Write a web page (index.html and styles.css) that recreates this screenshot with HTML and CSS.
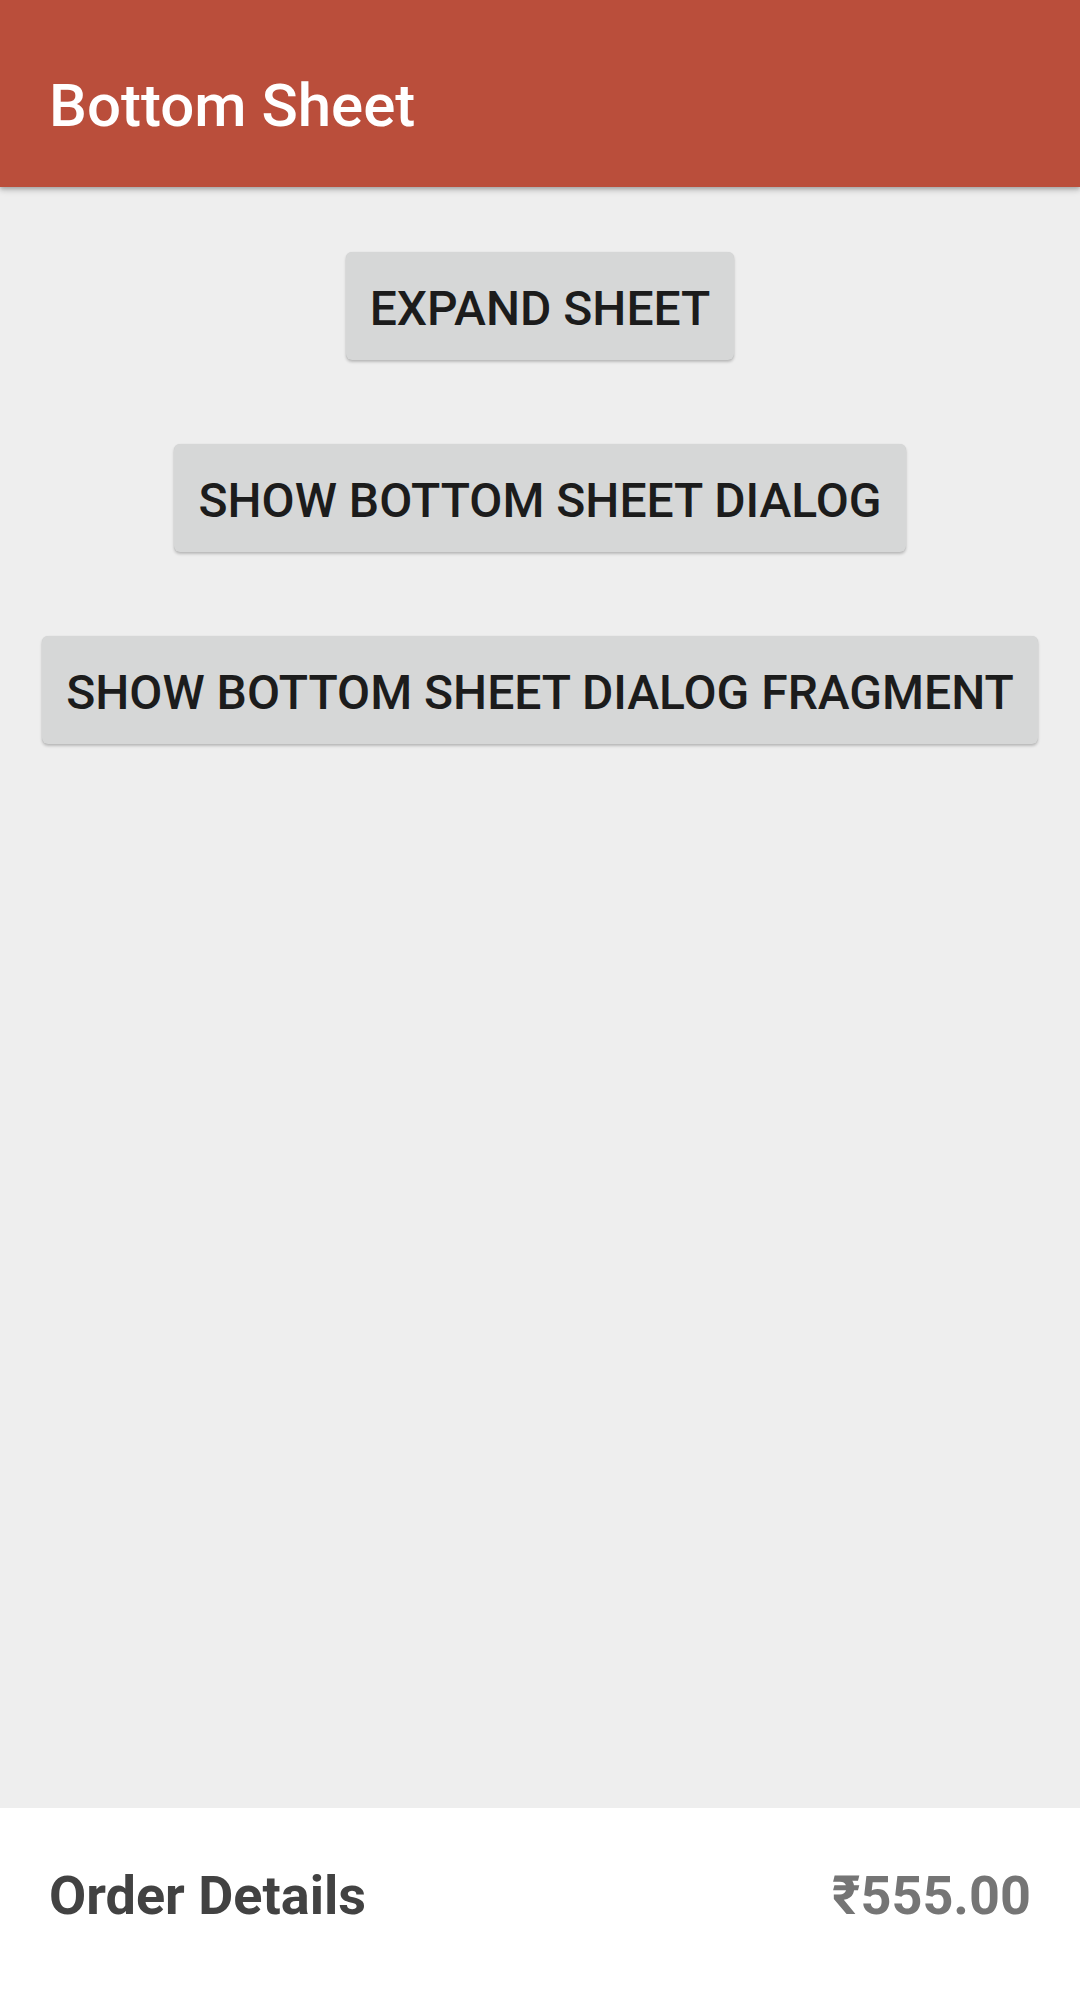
FILE: index.html
```html
<!DOCTYPE html>
<html>
<head>
<meta charset="utf-8">
<link rel="stylesheet" href="styles.css">
</head>
<body>
<div class="screen">
  <header class="appbar">
    <h1 class="title">Bottom Sheet</h1>
  </header>
  <main class="content">
    <button class="btn">EXPAND SHEET</button>
    <button class="btn">SHOW BOTTOM SHEET DIALOG</button>
    <button class="btn">SHOW BOTTOM SHEET DIALOG FRAGMENT</button>
  </main>
  <section class="sheet">
    <div class="sheet-row">
      <span class="sheet-title">Order Details</span>
      <span class="sheet-price">₹555.00</span>
    </div>
  </section>
</div>
</body>
</html>
```
FILE: styles.css
```css
html, body {
  margin: 0;
  padding: 0;
}
body {
  font-family: Roboto, "Noto Sans", sans-serif;
  background: #eeeeee;
}
.screen {
  width: 1080px;
  height: 2007px;
  display: flex;
  flex-direction: column;
  overflow: hidden;
  background: #eeeeee;
}
.appbar {
  height: 187px;
  flex: none;
  background: #ba4e3b;
  display: flex;
  align-items: center;
  padding-left: 49px;
  box-shadow: 0 3px 6px rgba(0,0,0,0.22), 0 2px 3px rgba(0,0,0,0.12);
  position: relative;
  z-index: 2;
}
.title {
  margin: 0;
  margin-top: 24px;
  font-size: 60px;
  font-weight: 500;
  color: #ffffff;
  line-height: 1;
}
.content {
  flex: 1;
  display: flex;
  flex-direction: column;
  align-items: center;
  padding-top: 65px;
  gap: 84px;
}
.btn {
  height: 108px;
  padding: 4px 24px 0;
  border: none;
  border-radius: 6px;
  background: #d6d7d7;
  color: #1c1c1c;
  font-family: Roboto, "Noto Sans", sans-serif;
  font-size: 48px;
  font-weight: 500;
  box-shadow: 0 2px 3px rgba(0,0,0,0.22), 0 0 1px rgba(0,0,0,0.12);
}
.sheet {
  flex: none;
  height: 199px;
  background: #ffffff;
}
.sheet-row {
  display: flex;
  justify-content: space-between;
  align-items: center;
  padding: 56px 49px 0;
}
.sheet-title {
  font-size: 54px;
  font-weight: 700;
  color: #424242;
}
.sheet-price {
  font-size: 54px;
  font-weight: 700;
  color: #757575;
}
```
